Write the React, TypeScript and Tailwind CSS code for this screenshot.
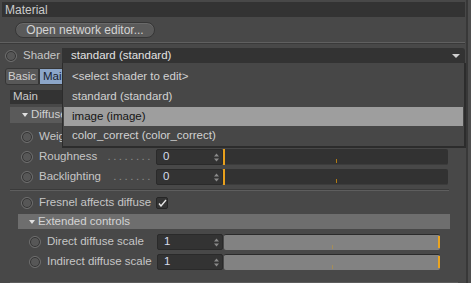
import type { ReactNode } from 'react'

const font = { fontFamily: '"Liberation Sans", Arial, sans-serif' }

function Radio() {
  return (
    <span className="block h-[12px] w-[12px] shrink-0 rounded-full border border-[#6e6e6e] bg-[#575757] shadow-[inset_0_0_0_1px_#303030]" />
  )
}

function Tri() {
  return (
    <svg width="6" height="4" viewBox="0 0 6 4" className="shrink-0">
      <polygon points="0,0 6,0 3,4" fill="#e0e0e0" />
    </svg>
  )
}

function Spinner() {
  return (
    <svg width="5" height="9" viewBox="0 0 5 9">
      <polygon points="0,3.5 5,3.5 2.5,0.5" fill="#8a8a8a" />
      <polygon points="0,5.5 5,5.5 2.5,8.5" fill="#8a8a8a" />
    </svg>
  )
}

function NumBox({ value, w }: { value: string; w: string }) {
  return (
    <div
      className={`flex h-[16px] ${w} shrink-0 items-center justify-between rounded-[2px] border border-[#2a2a2a] bg-[#333] pl-[6px] pr-[3px] text-[#d6deec]`}
    >
      <span>{value}</span>
      <Spinner />
    </div>
  )
}

function DiffuseRow({ label, dots }: { label: string; dots: number }) {
  return (
    <div className="flex h-[20px] items-center pl-[11px]">
      <Radio />
      <div className="ml-[6px] flex w-[117px] shrink-0 items-center justify-between pr-[3px]">
        <span className="whitespace-nowrap">{label}</span>
        <span className="whitespace-nowrap tracking-[2.5px] text-[#8c8c8c]">{'.'.repeat(dots)}</span>
      </div>
      <NumBox value="0" w="w-[67px]" />
      <span className="h-[16px] w-[2px] shrink-0 bg-[#e8a01c]" />
      <div className="relative h-[16px] w-[223px] shrink-0 rounded-r-[2px] border-b border-[#3c3c3c] bg-[#323232]">
        <span className="absolute bottom-[1px] left-[111px] h-[4px] w-[1px] bg-[#b27c14]" />
      </div>
    </div>
  )
}

function ExtRow({ label }: { label: string }) {
  return (
    <div className="flex h-[20px] items-center pl-[19px]">
      <Radio />
      <span className="ml-[6px] w-[110px] shrink-0 whitespace-nowrap">{label}</span>
      <NumBox value="1" w="w-[66px]" />
      <div className="relative ml-[1px] h-[16px] w-[216px] shrink-0 rounded-[2px] border-t border-[#2b2b2b] bg-[#828282]">
        <span className="absolute bottom-[1px] left-[108px] h-[4px] w-[1px] bg-[#a48c58]" />
        <span className="absolute right-0 top-[1px] h-[12px] w-[2px] bg-[#eaa420]" />
      </div>
    </div>
  )
}

function MenuItem({ children, active }: { children: ReactNode; active?: boolean }) {
  return (
    <div
      className={`flex h-[20px] items-center ${active ? 'mx-[1px] bg-[#9e9e9e] pl-[8px] text-[#151515]' : 'pl-[9px] text-[#d2d2d2]'}`}
    >
      {children}
    </div>
  )
}

export default function App() {
  return (
    <div
      style={font}
      className="relative flex h-[283px] w-[471px] overflow-hidden bg-[#484848] text-[11.5px] leading-none text-[#c6c6c6]"
    >
      <div className="flex w-[466px] flex-col pt-[2px]">
        <div className="ml-[2px] flex h-[15px] w-[463px] items-center bg-[#333] pl-[3px] text-[12px] text-[#cbcbcb]">
          Material
        </div>

        <div className="mt-[5px] pl-[15px]">
          <button className="flex h-[16px] w-[140px] items-center justify-center rounded-full border border-[#363636] bg-[#5a5a5a] text-[12px] text-[#d4d4d4] shadow-[inset_0_1px_0_#6a6a6a]">
            Open network editor...
          </button>
        </div>

        <div className="mt-[4px] h-[2px] w-[465px] border-t border-[#606060] bg-[#3a3a3a]" />

        <div className="mt-[4px] flex h-[16px] items-center">
          <div className="pl-[5px]">
            <Radio />
          </div>
          <span className="ml-[6px] w-[39px]">Shader</span>
          <div className="flex h-[16px] w-[403px] items-center justify-between rounded-r-[3px] border-b border-[#2c2c2c] bg-[#333] pl-[9px] pr-[5px] text-[#e2e2e2]">
            <span>standard (standard)</span>
            <svg width="8" height="4" viewBox="0 0 8 4">
              <polygon points="0,0 8,0 4,4" fill="#d0d0d0" />
            </svg>
          </div>
        </div>

        <div className="mt-[4px] flex h-[17px] pl-[5px]">
          <div className="flex w-[34px] items-center justify-center rounded-l-[3px] border border-[#363636] bg-[#585858] text-[#d0d0d0]">
            Basic
          </div>
          <div className="flex w-[36px] items-center rounded-r-[3px] border border-[#363636] bg-[#8ca6c9] pl-[3px] text-[#18212e]">
            Main
          </div>
        </div>

        <div className="ml-[10px] mt-[5px] flex w-[439px] flex-col">
          <div className="flex h-[14px] items-center bg-[#333] pl-[3px] text-[#cbcbcb]">Main</div>
          <div className="mt-[3px] flex h-[16px] items-center gap-[3px] bg-[#5a5a5a] pl-[12px] text-[#d0d0d0]">
            <Tri />
            Diffuse
          </div>

          <div className="mt-[4px] flex flex-col">
            <DiffuseRow label="Weight" dots={11} />
            <DiffuseRow label="Roughness" dots={8} />
            <DiffuseRow label="Backlighting" dots={7} />
          </div>

          <div className="mt-[2px] h-[2px] w-full border-t border-[#3a3a3a] bg-[#5e5e5e]" />

          <div className="mt-[2px] flex h-[20px] items-center pl-[11px]">
            <Radio />
            <span className="ml-[6px] w-[117px] shrink-0 whitespace-nowrap">Fresnel affects diffuse</span>
            <span className="flex h-[12px] w-[12px] items-center justify-center rounded-[2px] border border-[#262626] bg-[#343434]">
              <svg width="9" height="8" viewBox="0 0 9 8">
                <path d="M1 4.5 L3 7 L8 1" fill="none" stroke="#e6e6e6" strokeWidth="1.4" />
              </svg>
            </span>
          </div>

          <div className="ml-[8px] mt-[1px] flex h-[15px] w-[432px] items-center gap-[3px] bg-[#6e6e6e] pl-[11px] text-[#d4d4d4]">
            <Tri />
            Extended controls
          </div>

          <div className="mt-[3px] flex flex-col">
            <ExtRow label="Direct diffuse scale" />
            <ExtRow label="Indirect diffuse scale" />
          </div>

          <div className="mt-[10px] h-[1px] w-[448px] bg-[#5c5c5c]" />
        </div>
      </div>

      <div className="flex w-[5px]">
        <span className="w-[2px] bg-[#383838]" />
        <span className="w-[3px] bg-[#4e4e4e]" />
      </div>

      <div className="absolute left-[62px] top-[63px] flex h-[85px] w-[404px] flex-col border-b-2 border-l border-r-2 border-[#2c2c2c] bg-[#474747] pt-[4px]">
        <MenuItem>&lt;select shader to edit&gt;</MenuItem>
        <MenuItem>standard (standard)</MenuItem>
        <MenuItem active>image (image)</MenuItem>
        <MenuItem>color_correct (color_correct)</MenuItem>
      </div>
    </div>
  )
}
